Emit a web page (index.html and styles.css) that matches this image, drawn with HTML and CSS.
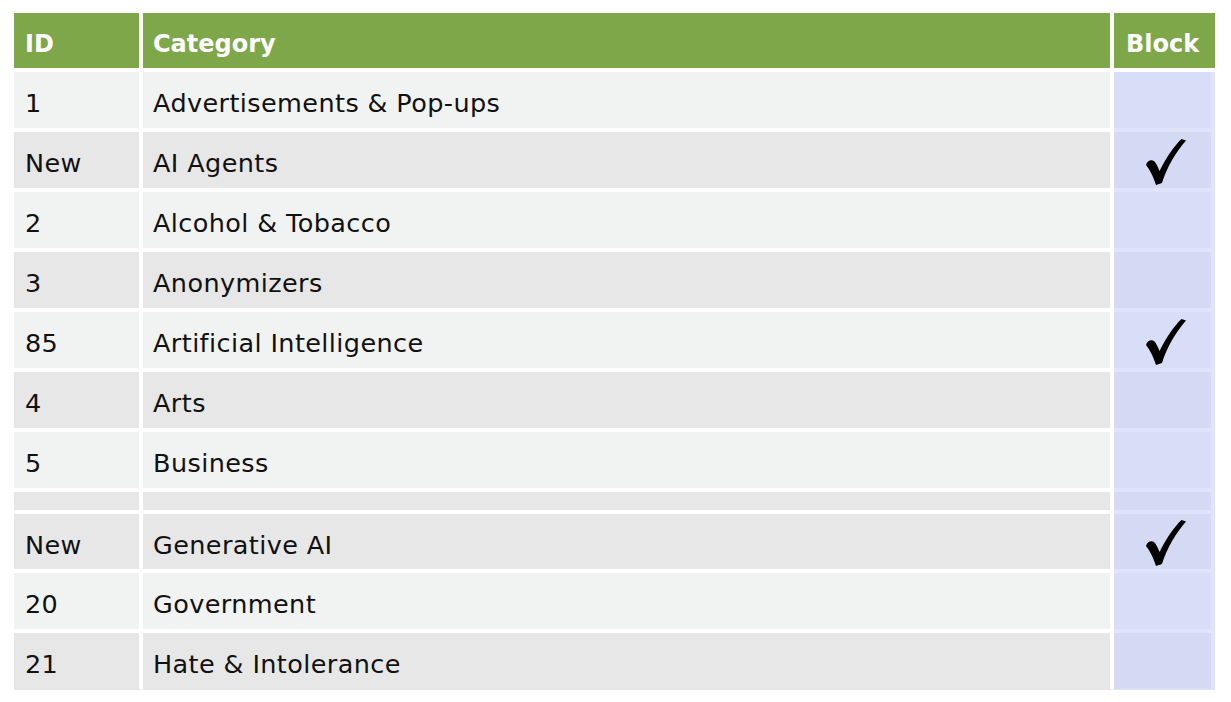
FILE: index.html
```html
<!DOCTYPE html>
<html>
<head>
<meta charset="utf-8">
<link rel="stylesheet" href="styles.css">
</head>
<body>
<div class="table">
  <div class="row head">
    <div class="cell id">ID</div>
    <div class="cell cat">Category</div>
    <div class="cell blk">Block</div>
  </div>
  <div class="row odd">
    <div class="cell id">1</div>
    <div class="cell cat">Advertisements &amp; Pop-ups</div>
    <div class="cell blk"></div>
  </div>
  <div class="row even">
    <div class="cell id">New</div>
    <div class="cell cat">AI Agents</div>
    <div class="cell blk"><svg class="check" viewBox="0 0 40 46"><path d="M0,26 C1,22 5,20 8,22 C10,24 12,28 13.5,32 C20,19 28,7 35.5,0 L40,1.5 C30,13 21,28 16,44 L10,46 C7,37 4,31 0,26 Z"/></svg></div>
  </div>
  <div class="row odd">
    <div class="cell id">2</div>
    <div class="cell cat">Alcohol &amp; Tobacco</div>
    <div class="cell blk"></div>
  </div>
  <div class="row even">
    <div class="cell id">3</div>
    <div class="cell cat">Anonymizers</div>
    <div class="cell blk"></div>
  </div>
  <div class="row odd">
    <div class="cell id">85</div>
    <div class="cell cat">Artificial Intelligence</div>
    <div class="cell blk"><svg class="check" viewBox="0 0 40 46"><path d="M0,26 C1,22 5,20 8,22 C10,24 12,28 13.5,32 C20,19 28,7 35.5,0 L40,1.5 C30,13 21,28 16,44 L10,46 C7,37 4,31 0,26 Z"/></svg></div>
  </div>
  <div class="row even">
    <div class="cell id">4</div>
    <div class="cell cat">Arts</div>
    <div class="cell blk"></div>
  </div>
  <div class="row odd">
    <div class="cell id">5</div>
    <div class="cell cat">Business</div>
    <div class="cell blk"></div>
  </div>
  <div class="row even thin">
    <div class="cell id"></div>
    <div class="cell cat"></div>
    <div class="cell blk"></div>
  </div>
  <div class="row even short">
    <div class="cell id">New</div>
    <div class="cell cat">Generative AI</div>
    <div class="cell blk"><svg class="check" viewBox="0 0 40 46"><path d="M0,26 C1,22 5,20 8,22 C10,24 12,28 13.5,32 C20,19 28,7 35.5,0 L40,1.5 C30,13 21,28 16,44 L10,46 C7,37 4,31 0,26 Z"/></svg></div>
  </div>
  <div class="row odd">
    <div class="cell id">20</div>
    <div class="cell cat">Government</div>
    <div class="cell blk"></div>
  </div>
  <div class="row even last">
    <div class="cell id">21</div>
    <div class="cell cat">Hate &amp; Intolerance</div>
    <div class="cell blk"></div>
  </div>
</div>
</body>
</html>
```

FILE: styles.css
```css
html, body {
  margin: 0;
  background: #ffffff;
}
body {
  padding: 13px 14px;
  font-family: "DejaVu Sans", "Liberation Sans", sans-serif;
  color: #111111;
}
.table {
  width: 1201px;
  display: flex;
  flex-direction: column;
}
.row {
  display: grid;
  grid-template-columns: 129px 971px 101px;
  height: 60px;
}
.cell {
  display: flex;
  align-items: center;
  box-sizing: border-box;
  padding-top: 7px;
  font-size: 25.5px;
  letter-spacing: 0.4px;
  line-height: 25px;
  white-space: nowrap;
  border-bottom: 4px solid #ffffff;
}
.cell.id {
  padding-left: 11px;
  border-right: 4px solid #ffffff;
}
.cell.cat {
  padding-left: 10px;
  border-right: 4px solid #ffffff;
}
.cell.blk {
  justify-content: center;
  padding-top: 3px;
  background-clip: padding-box;
  border-bottom-color: #dfe4fc;
  border-right: 4px solid #dfe4fc;
  background-color: #d8def8;
}
.head {
  height: 59px;
}
.head .cell {
  background: #7ea74a;
  color: #ffffff;
  font-weight: bold;
  font-size: 24px;
  letter-spacing: 0;
}
.head .cell.blk {
  padding-left: 12px;
  padding-top: 7px;
  justify-content: flex-start;
  background: #7ea74a;
  border-right: 0;
  border-bottom-color: #ffffff;
}
.odd .cell.id, .odd .cell.cat {
  background: #f1f2f2;
}
.even .cell.id, .even .cell.cat {
  background: #e7e7e7;
}
.even .cell.blk {
  background-color: #d4daf4;
}
.thin {
  height: 22px;
}
.short {
  height: 59px;
}
.last {
  height: 57px;
}
.last .cell {
  border-bottom-width: 1px;
}
.last .cell.id, .last .cell.cat {
  border-bottom-color: transparent;
}
.check {
  width: 40px;
  height: 46px;
  fill: #000000;
  margin-left: 6px;
}
```
